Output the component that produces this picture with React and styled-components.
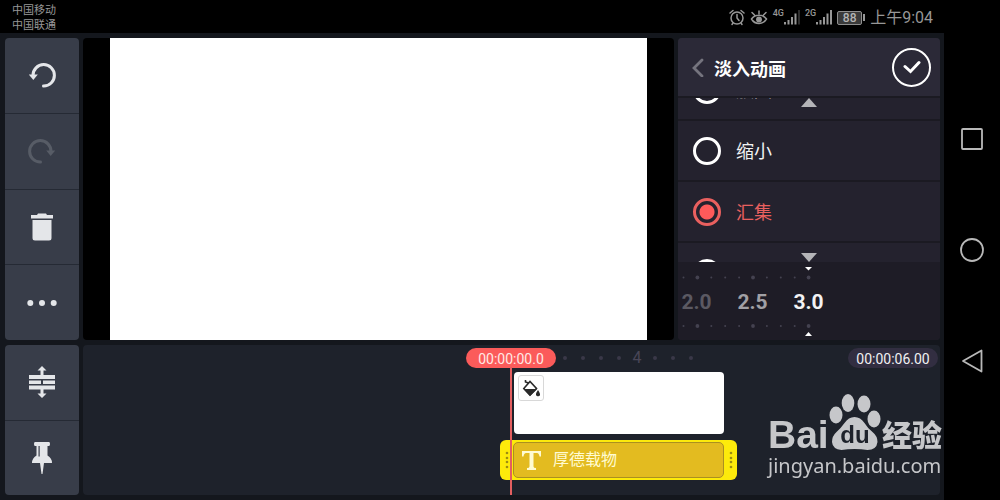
import React from "react";
import styled, { createGlobalStyle, css } from "styled-components";

const Global = createGlobalStyle`
  * { box-sizing: border-box; }
  html, body, #root { height: 100%; }
  body {
    margin: 0;
    background: #000;
    color: #e6e7e9;
    font-family: Roboto, "Noto Sans CJK SC", sans-serif;
    overflow: hidden;
  }
  button { border: 0; padding: 0; background: none; color: inherit; font: inherit; cursor: pointer; }
  svg { display: block; flex: none; }
`;

const Screen = styled.div`
  display: grid;
  grid-template-columns: minmax(0, 1fr) 56px;
  grid-template-rows: 33px minmax(0, 1fr);
  height: 100vh;
  min-height: 500px;
`;

const StatusBar = styled.header`
  grid-column: 1 / -1;
  display: flex;
  justify-content: space-between;
  align-items: center;
  padding: 0 67px 0 12px;
  color: #979797;
`;

const Carriers = styled.div`
  font-size: 11px;
  line-height: 15px;
  padding-top: 2px;
`;

const StatusIcons = styled.div`
  display: flex;
  align-items: center;
  gap: 5px;
  padding-top: 2px;
`;

const Signal = styled.span`
  display: flex;
  align-items: flex-start;
  height: 17px;
  font-size: 9px;
  line-height: 9px;
  font-weight: 500;
`;

const Battery = styled.span`
  display: flex;
  align-items: center;
  &::after {
    content: "";
    width: 2px;
    height: 7px;
    margin-left: 1px;
    background: #979797;
  }
`;

const BatteryCell = styled.span`
  width: 25px;
  height: 14px;
  border: 1px solid #8e8e8e;
  border-radius: 2px;
  background: #3a3a3a;
  color: #b4b4b4;
  font-size: 12px;
  line-height: 12px;
  font-weight: 500;
  text-align: center;
`;

const Clock = styled.time`
  font-size: 16px;
  line-height: 20px;
`;

const Editor = styled.main`
  display: grid;
  grid-template-columns: 74px minmax(0, 1fr) 262px;
  grid-template-rows: minmax(0, 302fr) minmax(0, 150fr);
  gap: 5px 4px;
  padding: 5px 4px 5px 5px;
  background: #14171d;
`;

const ToolColumn = styled.div`
  display: flex;
  flex-direction: column;
  border-radius: 4px;
  overflow: hidden;
  background: #383d49;
`;

const ToolButton = styled.button`
  flex: 1;
  display: flex;
  align-items: center;
  justify-content: center;
  color: ${(p) => (p.disabled ? "#575c66" : "#e4e6e9")};
  & + & { border-top: 1px solid #252a34; }
`;

const Preview = styled.section`
  display: flex;
  padding: 0 27px;
  background: #000;
  border-radius: 4px;
`;

const Frame = styled.div`
  flex: 1;
  background: #fff;
`;

const Panel = styled.aside`
  display: flex;
  flex-direction: column;
  border-radius: 4px;
  overflow: hidden;
  background: #24222e;
`;

const PanelHeader = styled.div`
  display: flex;
  align-items: center;
  flex: none;
  height: 60px;
  padding: 0 9px 0 12px;
  background: #2b2937;
  border-bottom: 2px solid #1b1a22;
`;

const BackButton = styled.button`
  color: #75747e;
  margin-right: 8px;
`;

const Title = styled.h1`
  flex: 1;
  margin: 0;
  padding-top: 6px;
  color: #fff;
  font-size: 18px;
  line-height: 24px;
  font-weight: 700;
`;

const DoneButton = styled.button`
  display: flex;
  align-items: center;
  justify-content: center;
  width: 39px;
  height: 39px;
  border: 2px solid #fff;
  border-radius: 50%;
  color: #fff;
`;

const OptionViewport = styled.div`
  position: relative;
  flex: 1;
  min-height: 0;
  overflow: hidden;
`;

const OptionList = styled.div`
  margin-top: -38px;
`;

const Option = styled.label`
  display: flex;
  align-items: center;
  gap: 15px;
  height: 61px;
  padding-left: 15px;
  border-bottom: 2px solid #1b1a22;
  color: #f2f2f3;
  font-size: 18px;
  line-height: 24px;
  &:has(input:checked) { color: #e9605f; }
`;

const OptionName = styled.span`
  padding-top: 2px;
`;

const Radio = styled.input`
  appearance: none;
  width: 28px;
  height: 28px;
  margin: 0;
  border: 3px solid #fff;
  border-radius: 50%;
  &:checked {
    border-color: #e9605f;
    background: radial-gradient(circle, #fe5a5a 7px, transparent 8px);
  }
`;

const ScrollHint = styled.svg`
  position: absolute;
  left: 50%;
  transform: translateX(-50%);
  ${(p) => (p.$down ? css`bottom: 0;` : css`top: 0;`)}
`;

const Wheel = styled.div`
  flex: none;
  display: flex;
  flex-direction: column;
  justify-content: space-between;
  height: 78px;
  padding: 4px 0 3px;
  background: #1e1c26;
`;

const WheelValues = styled.div`
  display: flex;
  gap: 25px;
  padding-left: 3px;
  font-size: 21px;
  line-height: 24px;
  font-weight: 700;
`;

const WheelValue = styled.span`
  width: 31px;
  text-align: center;
  color: ${(p) => p.$color};
`;

const Timeline = styled.section`
  position: relative;
  grid-column: 2 / -1;
  background: #1e222b;
  border-radius: 4px;
`;

const Ruler = styled.div`
  display: flex;
  align-items: center;
  height: 26px;
`;

const timePill = css`
  width: 90px;
  height: 20px;
  border-radius: 10px;
  font-size: 14px;
  line-height: 22px;
  text-align: center;
`;

const CurrentTime = styled.div`
  ${timePill}
  margin-left: 383px;
  background: #fb5b5a;
  color: #ffe9e6;
`;

const Ticks = styled.div`
  flex: 1;
  display: flex;
  align-items: center;
  gap: 14px;
  padding-left: 7px;
  color: #494657;
  font-size: 16px;
  line-height: 20px;
`;

const Tick = styled.i`
  width: 4px;
  height: 4px;
  border-radius: 50%;
  background: #3a3848;
`;

const TickLabel = styled.span`
  width: 10px;
  margin: 0 -3px;
  text-align: center;
`;

const TotalTime = styled.div`
  ${timePill}
  margin-right: 2px;
  background: #322e41;
  color: #f0f0f2;
`;

const Tracks = styled.div`
  display: flex;
  flex-direction: column;
  align-items: flex-start;
  gap: 6px;
  padding: 1px 0 0 417px;
`;

const MediaClip = styled.button`
  display: flex;
  align-items: flex-start;
  width: 210px;
  height: 62px;
  margin-left: 14px;
  padding: 3px 4px;
  border-radius: 4px;
  background: #fff;
`;

const FillBadge = styled.span`
  display: flex;
  align-items: center;
  justify-content: center;
  width: 26px;
  height: 26px;
  border: 1px solid #d8d8d8;
  border-radius: 3px;
  color: #2b2b2b;
`;

const TextClip = styled.button`
  display: flex;
  align-items: center;
  width: 237px;
  height: 40px;
  border-radius: 6px;
  background: #fdea0b;
`;

const Grip = styled.span`
  display: flex;
  justify-content: center;
  width: 13px;
  color: #9c8d12;
`;

const ClipBody = styled.span`
  flex: 1;
  display: flex;
  align-items: center;
  gap: 12px;
  height: 36px;
  padding-left: 8px;
  border: 1px solid #ab9020;
  border-radius: 5px;
  background: #e3bb20;
  color: #fffbd2;
  font-size: 16px;
  line-height: 24px;
`;

const Playhead = styled.div`
  position: absolute;
  top: 22px;
  bottom: 0;
  left: 427px;
  width: 2px;
  background: #e35f60;
`;

const SystemNav = styled.nav`
  display: flex;
  flex-direction: column;
  align-items: center;
  justify-content: center;
  gap: 87px;
  padding-bottom: 33px;
  color: #b9b9b9;
`;

const NavButton = styled.button`
  display: flex;
`;

const Watermark = styled.div`
  position: fixed;
  right: 54px;
  bottom: 22px;
  width: 178px;
  color: #c6c7ca;
  pointer-events: none;
`;

const Brand = styled.div`
  display: flex;
  align-items: flex-end;
  height: 60px;
`;

const BrandWord = styled.span`
  width: 60px;
  font: 700 39px/38px "Liberation Sans", sans-serif;
`;

const Paw = styled.span`
  position: relative;
  width: 54px;
  height: 60px;
`;

const PawWord = styled.span`
  position: absolute;
  left: 0;
  right: 0;
  bottom: 7px;
  color: #1e222b;
  font: 700 24px/24px "Liberation Sans", sans-serif;
  text-align: center;
`;

const BrandSuffix = styled.span`
  padding-bottom: 5px;
  font: 900 30px/32px "Noto Sans CJK SC", sans-serif;
`;

const Site = styled.div`
  font: 400 20px/24px "Noto Sans", sans-serif;
`;

function SignalIcon({ label, last }) {
  return (
    <Signal>
      {label}
      <svg width="16" height="17" viewBox="0 0 16 17" fill="currentColor">
        <path d="M0 13h2v2.500H0zM3.500 11h2v4.500h-2zM7 8h2v7.500H7zM10.500 4.500h2v11h-2z" />
        <path d="M14 1h2v14.500h-2z" opacity={last} />
      </svg>
    </Signal>
  );
}

function GripDots() {
  return (
    <Grip>
      <svg width="6" height="20" viewBox="0 0 6 20" fill="currentColor">
        {[3, 8, 12, 17].map((y) => (
          <circle key={y} cx="3" cy={y} r="1.300" />
        ))}
      </svg>
    </Grip>
  );
}

function WheelDots({ up }) {
  const dots = Array.from({ length: 10 }, (_, i) => i);
  return (
    <svg width="262" height="14" viewBox="0 0 262 14">
      {dots.map((i) => (
        <circle key={i} cx={5.5 + i * 13.9} cy={up ? 3 : 11.5} r={i % 4 === 1 ? 1.9 : 1} fill="#444250" />
      ))}
      <path d={up ? "M127 13l3.500-4 3.500 4z" : "M127 1h7l-3.500 3.500z"} fill="#fff" />
    </svg>
  );
}

export default function App() {
  const [choice, setChoice] = React.useState("汇集");
  return (
    <>
      <Global />
      <Screen>
        <StatusBar>
          <Carriers>
            <div>中国移动</div>
            <div>中国联通</div>
          </Carriers>
          <StatusIcons>
            <svg width="16" height="17" viewBox="0 0 16 17" fill="none" stroke="currentColor" strokeWidth="1.500" strokeLinecap="round">
              <circle cx="8" cy="9" r="6" />
              <path d="M8 5.500V9l2 2.500M1 4l3-2.500M15 4l-3-2.500M4 14l-1 1.500M12 14l1 1.500" />
            </svg>
            <svg width="18" height="17" viewBox="0 0 18 17" fill="none" stroke="currentColor" strokeWidth="1.500" strokeLinecap="round">
              <path d="M1.500 10C5 5 13 5 16.500 10 13 16 5 16 1.500 10zM9 5V2M4.500 6L2 3.500M13.500 6L16 3.500" />
              <circle cx="9" cy="10.500" r="2.200" fill="currentColor" />
            </svg>
            <SignalIcon label="4G" last="0.300" />
            <SignalIcon label="2G" last="1" />
            <Battery>
              <BatteryCell>88</BatteryCell>
            </Battery>
            <Clock>上午9:04</Clock>
          </StatusIcons>
        </StatusBar>

        <Editor>
          <ToolColumn>
            <ToolButton aria-label="撤销">
              <svg width="28" height="28" viewBox="0 0 28 28" fill="none" stroke="currentColor" strokeWidth="3" strokeLinecap="round">
                <path d="M15.500 25A10.700 10.700 0 1 0 5 14.500" />
                <path d="M.8 13.500h9l-4.500 5.500z" fill="currentColor" stroke="none" />
              </svg>
            </ToolButton>
            <ToolButton aria-label="重做" disabled>
              <svg width="28" height="28" viewBox="0 0 28 28" fill="none" stroke="currentColor" strokeWidth="3" strokeLinecap="round">
                <path d="M12.500 25A10.700 10.700 0 1 1 23 14.500" />
                <path d="M27.200 13.500h-9l4.500 5.500z" fill="currentColor" stroke="none" />
              </svg>
            </ToolButton>
            <ToolButton aria-label="删除">
              <svg width="24" height="28" viewBox="0 0 24 28" fill="currentColor">
                <path d="M1 2h6l1-1.500h8L17 2h6v3.500H1zM2.500 7h19v18q0 2.500-2.500 2.500H5q-2.500 0-2.500-2.500z" />
              </svg>
            </ToolButton>
            <ToolButton aria-label="更多">
              <svg width="30" height="6" viewBox="0 0 30 6" fill="currentColor">
                <circle cx="3.300" cy="3" r="3" />
                <circle cx="15" cy="3" r="3" />
                <circle cx="26.700" cy="3" r="3" />
              </svg>
            </ToolButton>
          </ToolColumn>

          <Preview>
            <Frame />
          </Preview>

          <Panel>
            <PanelHeader>
              <BackButton aria-label="返回">
                <svg width="16" height="20" viewBox="0 0 16 20" fill="none" stroke="currentColor" strokeWidth="2.800" strokeLinecap="round">
                  <path d="M12 3L4 11l8 8" />
                </svg>
              </BackButton>
              <Title>淡入动画</Title>
              <DoneButton aria-label="完成">
                <svg width="18" height="14" viewBox="0 0 18 14" fill="none" stroke="currentColor" strokeWidth="3" strokeLinecap="round">
                  <path d="M2 6.500L7.500 11.500 16 2.500" />
                </svg>
              </DoneButton>
            </PanelHeader>
            <OptionViewport>
              <OptionList>
                {["放大", "缩小", "汇集", "滑动"].map((name) => (
                  <Option key={name}>
                    <Radio type="radio" name="animation" checked={choice === name} onChange={() => setChoice(name)} />
                    <OptionName>{name}</OptionName>
                  </Option>
                ))}
              </OptionList>
              <ScrollHint width="16" height="9" viewBox="0 0 16 9" fill="#b4b4b8">
                <path d="M8 0l8 9H0z" />
              </ScrollHint>
              <ScrollHint $down width="16" height="9" viewBox="0 0 16 9" fill="#b4b4b8">
                <path d="M0 0h16L8 9z" />
              </ScrollHint>
            </OptionViewport>
            <Wheel>
              <WheelDots />
              <WheelValues>
                <WheelValue $color="#5b5962">2.0</WheelValue>
                <WheelValue $color="#a1a0a5">2.5</WheelValue>
                <WheelValue $color="#f2f2f3">3.0</WheelValue>
              </WheelValues>
              <WheelDots up />
            </Wheel>
          </Panel>

          <ToolColumn>
            <ToolButton aria-label="展开轨道">
              <svg width="28" height="32" viewBox="0 0 28 32" fill="currentColor">
                <path d="M14 0l4.500 4.500h-3V9h-3V4.500h-3zM14 32l4.500-4.500h-3V23h-3v4.500h-3z" />
                <path d="M1 9h26v4H1zM1 14.500h12v3.500H1zM15 14.500h12v3.500H15zM1 19.500h26v4H1z" />
              </svg>
            </ToolButton>
            <ToolButton aria-label="固定">
              <svg width="22" height="32" viewBox="0 0 22 32" fill="currentColor">
                <path fillRule="evenodd" d="M4 0h14q1 0 1 2t-1 2h-1.500v9.500Q21 16 21 21h-8l-1.500 11h-1L9 21H1q0-5 4.500-7.500V4H4Q3 4 3 2t1-2zM7.500 4v10.500h1.200V4z" />
              </svg>
            </ToolButton>
          </ToolColumn>

          <Timeline>
            <Ruler>
              <CurrentTime>00:00:00.0</CurrentTime>
              <Ticks>
                <Tick /><Tick /><Tick /><Tick />
                <TickLabel>4</TickLabel>
                <Tick /><Tick /><Tick />
              </Ticks>
              <TotalTime>00:00:06.00</TotalTime>
            </Ruler>
            <Tracks>
              <MediaClip aria-label="背景">
                <FillBadge>
                  <svg width="18" height="18" viewBox="0 0 18 18">
                    <path d="M3.500 1v2l3 1M1.800 9.500L8 2.500l6.500 7L8 16z" fill="none" stroke="currentColor" strokeWidth="1.600" />
                    <path d="M1.500 10h13.500L8 17zM16 11q3.500 5 1 6-1 .5-2 0-2.500-1 1-6z" fill="currentColor" />
                  </svg>
                </FillBadge>
              </MediaClip>
              <TextClip>
                <GripDots />
                <ClipBody>
                  <svg width="19" height="19" viewBox="0 0 19 19" fill="currentColor">
                    <path d="M0 0h19v5.500h-1.500Q17 2 15 2h-3.500v13.500q0 1.500 2.500 1.500v2H5v-2q2.500 0 2.500-1.500V2H4Q2 2 1.500 5.500H0z" />
                  </svg>
                  厚德载物
                </ClipBody>
                <GripDots />
              </TextClip>
            </Tracks>
            <Playhead />
          </Timeline>
        </Editor>

        <SystemNav>
          <NavButton aria-label="最近任务">
            <svg width="24" height="24" viewBox="0 0 24 24" fill="none" stroke="currentColor" strokeWidth="1.800">
              <rect x="2" y="2" width="20" height="20" rx="1" />
            </svg>
          </NavButton>
          <NavButton aria-label="主屏幕">
            <svg width="24" height="24" viewBox="0 0 24 24" fill="none" stroke="currentColor" strokeWidth="1.800">
              <circle cx="12" cy="12" r="11" />
            </svg>
          </NavButton>
          <NavButton aria-label="后退">
            <svg width="24" height="24" viewBox="0 0 24 24" fill="none" stroke="currentColor" strokeWidth="1.800" strokeLinejoin="round">
              <path d="M21.500 1.500v21L3 12z" />
            </svg>
          </NavButton>
        </SystemNav>
      </Screen>

      <Watermark>
        <Brand>
          <BrandWord>Bai</BrandWord>
          <Paw>
            <svg width="54" height="60" viewBox="0 0 54 60" fill="currentColor">
              <ellipse cx="8" cy="21" rx="6.500" ry="8.500" />
              <ellipse cx="20" cy="9" rx="6.300" ry="9" />
              <ellipse cx="36" cy="10" rx="6.500" ry="8.500" />
              <ellipse cx="46" cy="25" rx="6.500" ry="8.500" />
              <path d="M26.500 23q6 0 10 6 3 5 8 9t5 10q-1 8-10 8-6-1-13-1t-13 1q-9-1-9.500-8 0-6 4.500-10t8-9q4-6 10-6z" />
            </svg>
            <PawWord>du</PawWord>
          </Paw>
          <BrandSuffix>经验</BrandSuffix>
        </Brand>
        <Site>jingyan.baidu.com</Site>
      </Watermark>
    </>
  );
}
